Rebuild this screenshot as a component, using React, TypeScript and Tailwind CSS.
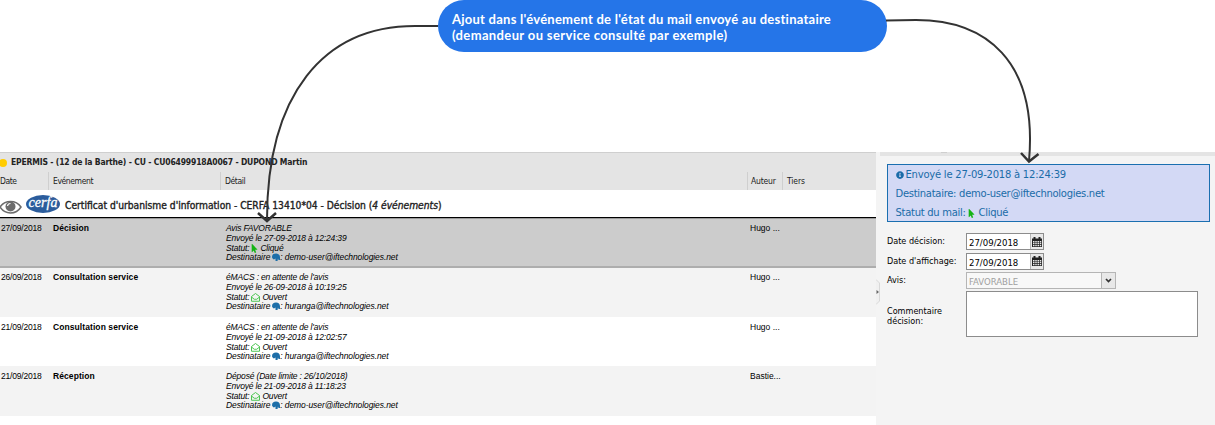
import { FaInfoCircle, FaMousePointer } from "react-icons/fa";

type EventRow = {
  date: string,
  name: string,
  detail: string,
  sent: string,
  status: "Cliqué" | "Ouvert",
  recipient: string,
  author: string,
};

const EVENTS: EventRow[] = [
  {
    date: "27/09/2018", name: "Décision", detail: "Avis FAVORABLE", sent: "27-09-2018 à 12:24:39",
    status: "Cliqué", recipient: "demo-user@iftechnologies.net", author: "Hugo ...",
  },
  {
    date: "26/09/2018", name: "Consultation service", detail: "éMACS : en attente de l'avis", sent: "26-09-2018 à 10:19:25",
    status: "Ouvert", recipient: "huranga@iftechnologies.net", author: "Hugo ...",
  },
  {
    date: "21/09/2018", name: "Consultation service", detail: "éMACS : en attente de l'avis", sent: "21-09-2018 à 12:02:57",
    status: "Ouvert", recipient: "huranga@iftechnologies.net", author: "Hugo ...",
  },
  {
    date: "21/09/2018", name: "Réception", detail: "Déposé (Date limite : 26/10/2018)", sent: "21-09-2018 à 11:18:23",
    status: "Ouvert", recipient: "demo-user@iftechnologies.net", author: "Bastie...",
  },
];

const ROW_STYLES = [
  "h-[50px] pt-[5px] bg-[#cccccc] border-t border-t-[#9a9a9a] border-b-2 border-b-[#adadad]",
  "h-[49px] pt-[5px] bg-[#f3f3f3]",
  "h-[49px] pt-[6px] bg-white",
  "h-[50px] pt-[6px] bg-[#f3f3f3]",
];

function OpenMailIcon() {
  return (
    <svg className="inline-block w-[9px] h-[9px] ml-[2px] mr-[2px] align-[-2px]" viewBox="0 0 18 18" fill="none" stroke="#4cc552" strokeWidth="2">
      <path d="M1 7 L9 1 L17 7 V16.500 H1 Z" />
      <path d="M1 8 L6.500 12.500 H11.500 L17 8" />
    </svg>
  );
}

function RecipientIcon() {
  return (
    <svg className="inline-block w-[8px] h-[8px] ml-[2px] align-[-1px]" viewBox="0 0 16 16" fill="#1d6fa9">
      <path d="M0 9 C0 3 3 1 8 1 C13 1 16 4 16 9 V14 H13 L12 11 L11 16 H7 L7 11 L4 13 L2 12 Z" />
    </svg>
  );
}

function CalendarIcon() {
  return (
    <svg className="w-[10px] h-[10px]" viewBox="0 0 20 20">
      <path d="M0 3 H3 V0 H7 V3 H13 V0 H17 V3 H20 V20 H0 Z" fill="#222" />
      <path
        d="
          M2 8 h3 v3 h-3 Z M6.500 8 h3 v3 h-3 Z M11 8 h3 v3 h-3 Z M15.500 8 h3 v3 h-3 Z
          M2 12 h3 v2.500 h-3 Z M6.500 12 h3 v2.500 h-3 Z M11 12 h3 v2.500 h-3 Z M15.500 12 h3 v2.500 h-3 Z
          M2 16 h3 v2.500 h-3 Z M6.500 16 h3 v2.500 h-3 Z M11 16 h3 v2.500 h-3 Z M15.500 16 h3 v2.500 h-3 Z
        "
        fill="#e8e8e8"
      />
    </svg>
  );
}

function EyeIcon() {
  return (
    <svg className="w-[22px] h-[16px]" viewBox="0 0 22 16" fill="none">
      <path d="M0 8 C5 0.500 16 0.500 21 8 C16 16 5 16 0 8 Z" stroke="#6b6b6b" strokeWidth="1.500" />
      <circle cx="10.500" cy="7.500" r="5" fill="#6b6b6b" />
      <path d="M7.500 7 A3 3 0 0 1 10.500 4.500" stroke="#fff" strokeWidth="1.200" />
    </svg>
  );
}

function CerfaLogo() {
  return (
    <div
      className="
        w-[34px] h-[18px] rounded-[50%] bg-[#2b5c9c] text-white flex items-center justify-center
        font-['Liberation_Serif',serif] italic text-[14px] leading-none pb-[2px] [-webkit-text-stroke:0.3px_white]
      "
    >
      cerfa
    </div>
  );
}

function EventLine({ event, className }: { event: EventRow, className: string }) {
  return (
    <div
      className={`
        grid grid-cols-[53px_173px_524px_1fr] text-[8.5px] leading-[9.8px] text-black
        font-['Liberation_Sans',sans-serif] ${className}
      `}
    >
      <div className="pl-[1px] tracking-[-0.2px]">{event.date}</div>
      <div className="font-bold tracking-[0.08px]">{event.name}</div>
      <div className="italic whitespace-nowrap tracking-[-0.17px]">
        <div>{event.detail}</div>
        <div>Envoyé le {event.sent}</div>
        <div>
          Statut:
          {event.status === "Cliqué"
            ? <FaMousePointer className="inline-block w-[7px] h-[9px] mx-[2px] align-[-2px] text-[#14b414]" />
            : <OpenMailIcon />
          }
          {event.status}
        </div>
        <div className="tracking-[-0.09px]">Destinataire<RecipientIcon />: {event.recipient}</div>
      </div>
      <div>{event.author}</div>
    </div>
  );
}

function EventsPanel() {
  return (
    <section className="w-[876px] bg-white font-['DejaVu_Sans_Condensed','DejaVu_Sans',sans-serif]">
      <div
        className="
          h-5 flex items-center bg-[#e4e4e4] border-t border-[#cfcfcf]
          text-[8.5px] tracking-[-0.16px] font-bold text-[#222]
        "
      >
        <span className="w-2 h-2 -ml-px mr-1 rounded-full bg-[#fc0]" />
        EPERMIS - (12 de la Barthe) - CU - CU06499918A0067 - DUPOND Martin
      </div>
      <div
        className="
          h-[18px] grid grid-cols-[48px_172px_527px_35px_1fr] leading-[18px]
          bg-[#e4e4e4] text-[8.5px] tracking-[-0.4px] text-[#222]
        "
      >
        <div>Date</div>
        <div className="pl-1 border-l border-[#cfcfcf]">Evénement</div>
        <div className="pl-1 border-l border-[#cfcfcf]">Détail</div>
        <div className="pl-[3px] tracking-[-0.2px] border-l border-[#cfcfcf]">Auteur</div>
        <div className="pl-1 tracking-[-0.1px] border-l border-[#cfcfcf]">Tiers</div>
      </div>
      <div className="h-7 flex items-center border-b border-black text-[#222]">
        <div className="pt-[7px]"><EyeIcon /></div>
        <div className="ml-1"><CerfaLogo /></div>
        <div className="ml-[5px] pt-[5px] text-[10.2px] [-webkit-text-stroke:0.35px_#222] whitespace-nowrap">
          Certificat d'urbanisme d'information - CERFA 13410*04 - Décision (<i>4 événements</i>)
        </div>
      </div>
      {EVENTS.map((event, i) => <EventLine key={i} event={event} className={ROW_STYLES[i]} />)}
    </section>
  );
}

function DateField({ label }: { label: string }) {
  return (
    <div className="flex h-[17px] mb-[2.500px]">
      <label className="w-[79px] leading-4">{label}</label>
      <div className="w-[78px] flex border border-[#8c8c8c] bg-white">
        <span className="flex-1 pl-[2px] leading-[17px] text-[9.5px]">27/09/2018</span>
        <span className="w-[13px] flex items-center justify-center bg-[#e8e8e8] border-l border-[#b5b5b5]">
          <CalendarIcon />
        </span>
      </div>
    </div>
  );
}

function DecisionPanel() {
  return (
    <section className="flex-1 bg-[#f4f4f4] font-['DejaVu_Sans_Condensed','DejaVu_Sans',sans-serif]">
      <div className="h-1 bg-[#e4e4e4]">
        <div className="w-[6px] h-px ml-[61px] bg-[#cfcfcf]" />
      </div>
      <div
        className="
          w-[323px] h-[58px] mt-2 ml-[7px] pl-[7.500px] border border-[#1a6fb0] bg-[#d3d9f5]
          text-[10px] tracking-[-0.29px] leading-[19px] text-[#1a6ca8] font-['DejaVu_Sans',sans-serif]
        "
      >
        <div className="tracking-[-0.23px]">
          <FaInfoCircle className="inline-block w-2 h-2 mr-[2px] align-[-0.500px]" />
          Envoyé le 27-09-2018 à 12:24:39
        </div>
        <div>Destinataire: demo-user@iftechnologies.net</div>
        <div>
          Statut du mail:{" "}
          <FaMousePointer className="inline-block w-[7px] h-[9px] mr-[3px] align-[-1.500px] text-[#14b414]" />
          Cliqué
        </div>
      </div>
      <div className="ml-[7px] mt-[11px] text-[9px] text-black">
        <DateField label="Date décision:" />
        <DateField label="Date d'affichage:" />
        <div className="flex h-[17px] mb-[2px]">
          <label className="w-[79px] leading-4">Avis:</label>
          <div className="w-[150px] flex border border-[#b5b5b5] bg-[#f8f8f8] text-[#a0a0a0]">
            <span className="flex-1 pl-[2px] leading-[17px] text-[9.5px]">FAVORABLE</span>
            <span className="w-[14px] flex items-center justify-center bg-[#e8e8e8] border-l border-[#b5b5b5]">
              <svg className="w-[7px] h-[5px]" viewBox="0 0 7 5" fill="none" stroke="#333" strokeWidth="1.700">
                <path d="M1 1 L3.500 3.500 L6 1" />
              </svg>
            </span>
          </div>
        </div>
        <div className="flex h-[46px]">
          <label className="w-[79px] pt-[15px] leading-[10px]">Commentaire décision:</label>
          <div className="w-[232px] border border-[#8c8c8c] bg-white" />
        </div>
      </div>
    </section>
  );
}

function Arrows() {
  return (
    <svg className="absolute inset-0 w-[1215px] h-[425px]" fill="none" stroke="#333" strokeWidth="2">
      <path d="M438 26 H415 C323 26 267 95 267 220" />
      <path d="M258 213 L267 221 L276 213" strokeWidth="2.500" />
      <path d="M886 20.500 L916 20 C985 20 1038 60 1029 161" />
      <path d="M1021 153 L1029 161.500 L1038.500 154" strokeWidth="2.500" />
    </svg>
  );
}

export default function App() {
  return (
    <main className="relative w-[1215px] h-[425px] overflow-hidden bg-white">
      <div className="h-[152px]">
        <div
          className="
            w-[449px] h-[52px] ml-[438px] pl-[14px] pt-[11px] rounded-full bg-[#2575e8] text-white
            font-['Lato',sans-serif] font-bold text-[13px] leading-4 whitespace-nowrap
          "
        >
          <div className="tracking-[0.25px]">Ajout dans l'événement de l'état du mail envoyé au destinataire</div>
          <div className="tracking-[0.37px]">(demandeur ou service consulté par exemple)</div>
        </div>
      </div>
      <div className="flex h-[273px]">
        <EventsPanel />
        <div className="w-1 bg-[#f4f4f4] pt-[127px]">
          <svg className="w-1 h-[26px]" viewBox="0 0 4 26">
            <path d="M0 0.500 L3.500 4 V22 L0 25.500" fill="#f0f0f0" stroke="#d8d8d8" />
            <path d="M0.500 11 L3 13 L0.500 15 Z" fill="#666" />
          </svg>
        </div>
        <DecisionPanel />
      </div>
      <Arrows />
    </main>
  );
}
